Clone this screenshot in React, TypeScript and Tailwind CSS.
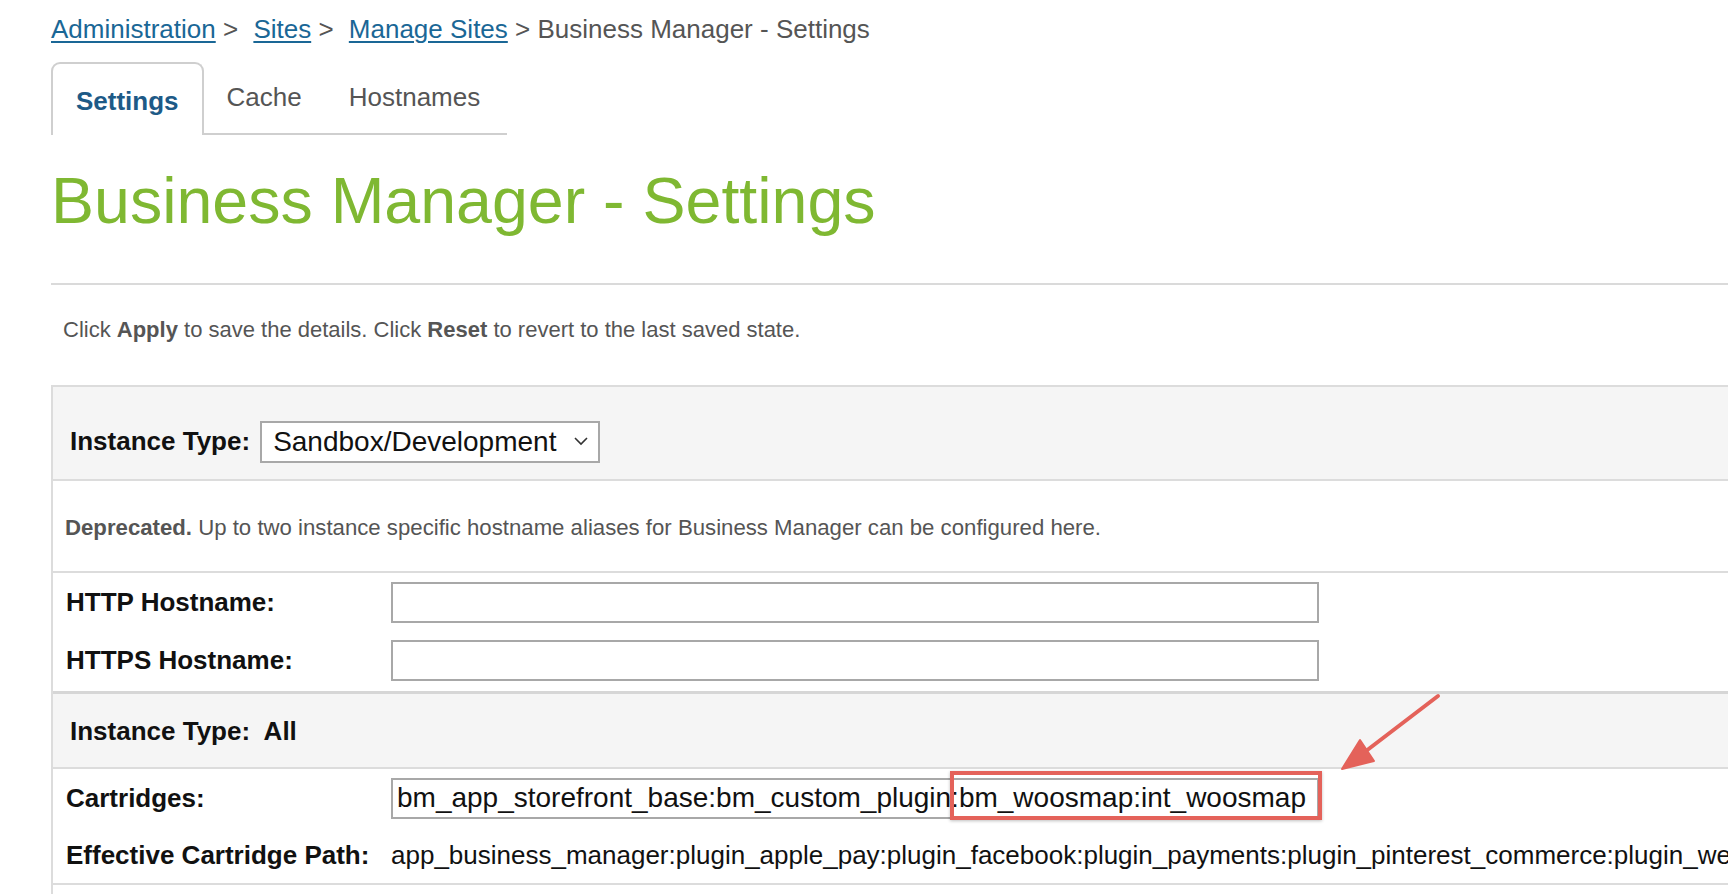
import React from 'react';

const font = { fontFamily: '"Liberation Sans", Arial, sans-serif' };

const Crumb: React.FC<{ label: string; first?: boolean }> = ({ label, first }) => (
    <a className={`text-[#1a6796] underline decoration-2 underline-offset-[3px] ${first ? '' : 'ml-[8px]'}`}>{label}</a>
);

const Chevron: React.FC = () => (
    <svg width="14" height="9" viewBox="0 0 14 9" className="ml-auto mr-[10px]">
        <polyline points="1,1 7,7 13,1" fill="none" stroke="#333" strokeWidth="1.6" />
    </svg>
);

const App: React.FC = () => {
    return (
        <div className="relative w-full h-[894px] overflow-hidden bg-white pl-[51px]" style={font}>
            {/* breadcrumb */}
            <div className="pt-[14px] h-[62px] text-[26px] leading-[30px] text-[#555] whitespace-nowrap">
                <Crumb label="Administration" first /> &gt; <Crumb label="Sites" /> &gt; <Crumb label="Manage Sites" /> &gt; Business Manager - Settings
            </div>

            {/* tabs */}
            <div className="flex h-[73px] text-[26px]">
                <div className="flex items-center px-[23px] pt-[3px] border-2 border-b-0 border-[#cfcfcf] rounded-t-[9px] font-bold text-[#1d5a87]">
                    Settings
                </div>
                <div className="flex items-center px-[23px] border-b-2 border-[#cfcfcf] text-[#555]">Cache</div>
                <div className="flex items-center pl-[24px] pr-[27px] border-b-2 border-[#cfcfcf] text-[#555]">Hostnames</div>
            </div>

            {/* title */}
            <h1 className="mt-[29px] text-[64.5px] leading-[74px] text-[#7fb832] whitespace-nowrap">Business Manager - Settings</h1>

            <div className="mt-[45px] h-[2px] bg-[#dadada]" />

            <p className="mt-[32px] pl-[12px] text-[22px] leading-[26px] text-[#555] whitespace-nowrap">
                Click <b>Apply</b> to save the details. Click <b>Reset</b> to revert to the last saved state.
            </p>

            {/* settings table */}
            <div className="mt-[42px] border-l-2 border-t-2 border-[#dcdcdc]">
                <div className="flex items-center h-[94px] pt-[17px] bg-[#f5f5f5] border-b-2 border-[#dcdcdc] pl-[17px]">
                    <span className="text-[26px] font-bold text-[#111]">Instance Type:</span>
                    <div className="ml-[10px] flex items-center w-[340px] h-[42px] border-2 border-[#a8a8a8] bg-white pl-[11px] text-[28px] text-[#111]">
                        Sandbox/Development
                        <Chevron />
                    </div>
                </div>

                <div className="flex items-center h-[92px] pt-[4px] border-b-2 border-[#dcdcdc] pl-[12px] text-[22.2px] text-[#555] whitespace-nowrap">
                    <span><b>Deprecated.</b> Up to two instance specific hostname aliases for Business Manager can be configured here.</span>
                </div>

                <div className="border-b-[3px] border-[#d6d6d6] pb-[2px]">
                    {['HTTP Hostname:', 'HTTPS Hostname:'].map((label) => (
                        <div key={label} className="flex items-center h-[58px]">
                            <span className="w-[338px] pl-[13px] text-[26px] font-bold text-[#111]">{label}</span>
                            <input className="w-[928px] h-[41px] border-2 border-[#a8a8a8] bg-white outline-none" />
                        </div>
                    ))}
                </div>

                <div className="flex items-center h-[75px] pt-[2px] bg-[#f5f5f5] border-b-2 border-[#dcdcdc] pl-[17px] text-[26px] font-bold text-[#111]">
                    Instance Type:&nbsp; All
                </div>

                <div className="flex items-center h-[58px]">
                    <span className="w-[338px] pl-[13px] text-[26px] font-bold text-[#111]">Cartridges:</span>
                    <div className="relative">
                        <input
                            readOnly
                            value="bm_app_storefront_base:bm_custom_plugin:bm_woosmap:int_woosmap"
                            className="w-[928px] h-[41px] border-2 border-[#a8a8a8] bg-white pl-[4px] text-[28px] text-[#111] outline-none"
                            style={font}
                        />
                        {/* annotation box */}
                        <div className="absolute left-[559px] top-[-7px] w-[372px] h-[49px] border-[4px] border-[#e4625a] shadow-[0_1px_3px_rgba(0,0,0,0.25)]" />
                    </div>
                </div>

                <div className="flex items-center h-[58px] border-b-2 border-[#dcdcdc] whitespace-nowrap">
                    <span className="shrink-0 w-[338px] pl-[13px] text-[26px] font-bold text-[#111]">Effective Cartridge Path:</span>
                    <span className="text-[26px] text-[#111]">
                        app_business_manager:plugin_apple_pay:plugin_facebook:plugin_payments:plugin_pinterest_commerce:plugin_we
                    </span>
                </div>
                <div className="h-[40px]" />
            </div>

            {/* annotation arrow */}
            <svg className="absolute left-[1320px] top-[677px]" width="130" height="100" viewBox="0 0 130 100">
                <line x1="118" y1="19" x2="46" y2="74" stroke="#e4625a" strokeWidth="4" strokeLinecap="round" />
                <polygon points="22,92 54,84 40,63" fill="#e4625a" stroke="#e4625a" strokeWidth="2" strokeLinejoin="round" />
            </svg>
        </div>
    );
};

export default App;
